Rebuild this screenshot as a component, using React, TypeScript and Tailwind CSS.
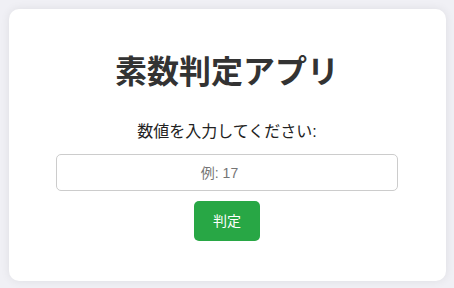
export default function App() {
  return (
    <div
      className="min-h-[288px] bg-[#f0f0f5] px-2 pt-[9px] pb-[7px]"
      style={{ fontFamily: '"Liberation Sans", Arial, "Noto Sans CJK JP", sans-serif' }}
    >
      <div className="mx-auto w-[437px] rounded-[10px] bg-white pt-[44px] pb-[40px] text-center shadow-[0_0_10px_rgba(0,0,0,0.08)]">
        <h1 className="h-[38px] text-[32px] leading-[38px] font-bold text-[#333]">素数判定アプリ</h1>
        <p className="mt-[29px] h-6 text-base leading-6 text-[#222]">数値を入力してください:</p>
        <input
          type="number"
          placeholder="例: 17"
          className="mx-auto mt-[10px] block h-[37px] w-[342px] rounded-[5px] border border-[#ccc] text-center text-sm text-[#333] outline-none placeholder:text-[#757575]"
        />
        <button className="mx-auto mt-[10px] block h-10 w-[66px] rounded-[5px] bg-[#28a745] text-sm text-white">
          判定
        </button>
      </div>
    </div>
  )
}
